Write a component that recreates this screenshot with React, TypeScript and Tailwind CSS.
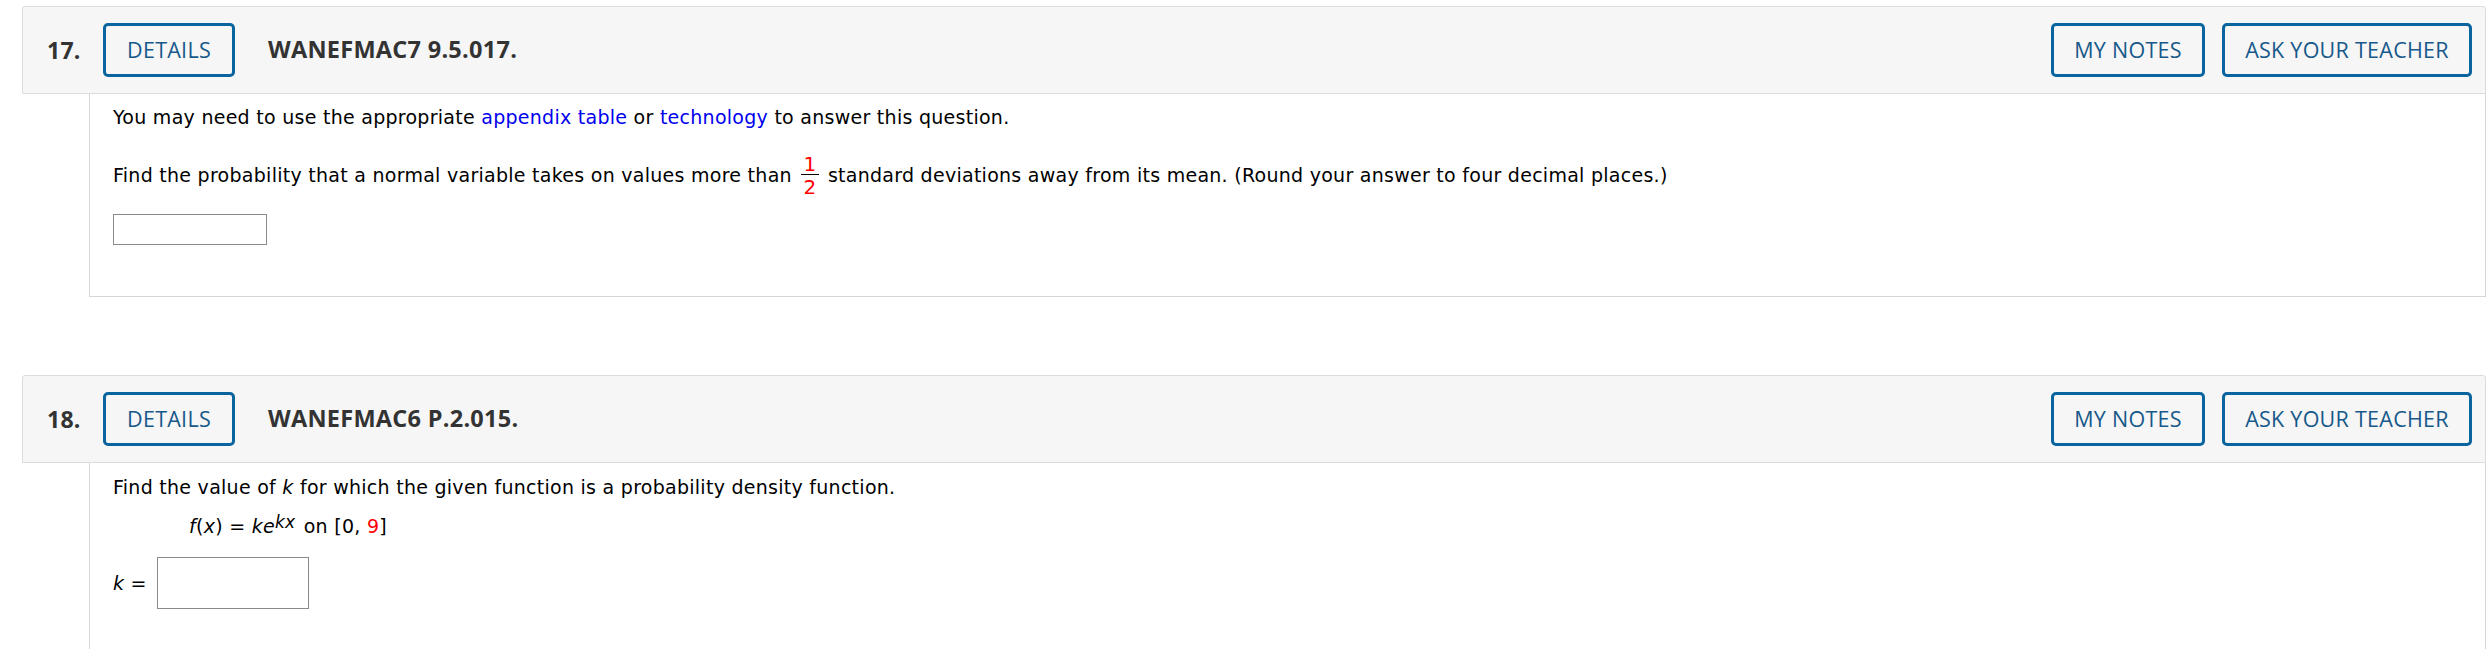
import React from 'react';

const headerFont = { fontFamily: '"Open Sans", "Noto Sans", sans-serif' };
const bodyFont = { fontFamily: '"DejaVu Sans", Verdana, sans-serif' };

function OutlineButton({ label, width }: { label: string; width: string }) {
  return (
    <button
      className={`h-[54px] ${width} shrink-0 rounded-[5px] border-[3px] border-[#0a649e] bg-[#f6f6f6] text-[21.5px] text-[#16598a] uppercase`}
    >
      {label}
    </button>
  );
}

function QuestionHeader({ num, code }: { num: string; code: string }) {
  return (
    <div
      className="flex h-[88px] items-center rounded-t-[3px] border border-[#dcdcdc] bg-[#f6f6f6] pl-[24px] pr-[13px]"
      style={headerFont}
    >
      <span className="w-[56px] text-[23px] font-bold text-[#333]">{num}</span>
      <OutlineButton label="Details" width="w-[132px]" />
      <span className="ml-[33px] text-[23.5px] font-bold text-[#333]">{code}</span>
      <div className="ml-auto flex gap-[17px]">
        <OutlineButton label="My Notes" width="w-[154px]" />
        <OutlineButton label="Ask Your Teacher" width="w-[250px]" />
      </div>
    </div>
  );
}

function Fraction() {
  return (
    <span className="mx-[9px] inline-flex flex-col items-center text-[20px] leading-[20px] text-[#ff0000]">
      <span>1</span>
      <span className="h-[1px] w-[18px] bg-black" />
      <span className="mt-[2px]">2</span>
    </span>
  );
}

export default function App() {
  return (
    <div
      className="h-[649px] w-full overflow-hidden bg-white pl-[22px] pr-[1px] pt-[6px] tracking-[0.27px]"
      style={bodyFont}
    >
      {/* Question 17 */}
      <QuestionHeader num="17." code="WANEFMAC7 9.5.017." />
      <div className="ml-[67px] h-[203px] border-x border-b border-[#d6d6d6] pl-[23px] pt-[11px] text-[19px] text-black">
        <p className="leading-[24px]">
          You may need to use the appropriate <a className="text-[#0000ee]">appendix table</a> or{' '}
          <a className="text-[#0000ee]">technology</a> to answer this question.
        </p>
        <p className="mt-[22px] flex h-[48px] items-center whitespace-pre">
          <span>Find the probability that a normal variable takes on values more than</span>
          <Fraction />
          <span>standard deviations away from its mean. (Round your answer to four decimal places.)</span>
        </p>
        <input className="mt-[15px] block h-[31px] w-[154px] border border-[#8a8a8a] bg-white" />
      </div>

      <div className="h-[78px]" />

      {/* Question 18 */}
      <QuestionHeader num="18." code="WANEFMAC6 P.2.015." />
      <div className="ml-[67px] h-[200px] border-l border-r border-[#d6d6d6] pl-[23px] pt-[12px] text-[19px] text-black">
        <p className="leading-[24px]">
          Find the value of <i>k</i> for which the given function is a probability density function.
        </p>
        <p className="mt-[15px] pl-[76px] leading-[24px]">
          <i>f</i>(<i>x</i>) = <i>k</i>
          <i>e</i>
          <sup className="relative top-[-5px] mr-[2px] text-[17px] italic">kx</sup> on [0,{' '}
          <span className="text-[#ff0000]">9</span>]
        </p>
        <div className="mt-[19px] flex items-center gap-[10px]">
          <span>
            <i>k</i> =
          </span>
          <input className="h-[52px] w-[152px] border border-[#8a8a8a] bg-white" />
        </div>
      </div>
    </div>
  );
}
